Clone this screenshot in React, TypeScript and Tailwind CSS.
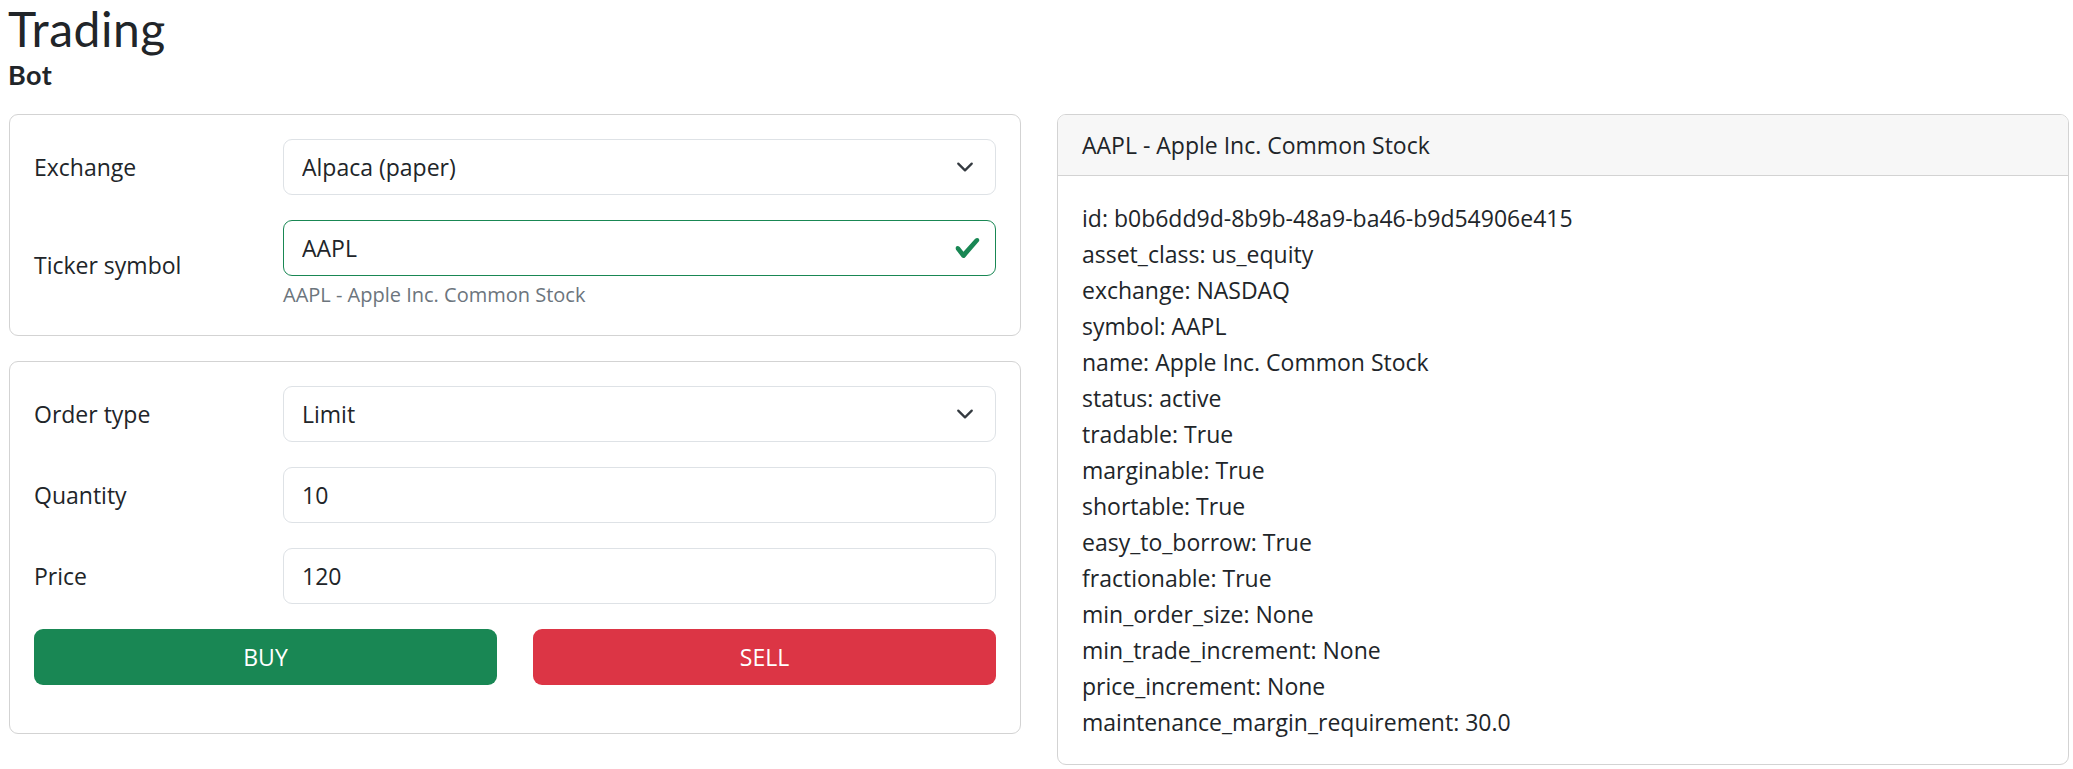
import React from 'react';

const assetInfo: [string, string][] = [
  ['id', 'b0b6dd9d-8b9b-48a9-ba46-b9d54906e415'],
  ['asset_class', 'us_equity'],
  ['exchange', 'NASDAQ'],
  ['symbol', 'AAPL'],
  ['name', 'Apple Inc. Common Stock'],
  ['status', 'active'],
  ['tradable', 'True'],
  ['marginable', 'True'],
  ['shortable', 'True'],
  ['easy_to_borrow', 'True'],
  ['fractionable', 'True'],
  ['min_order_size', 'None'],
  ['min_trade_increment', 'None'],
  ['price_increment', 'None'],
  ['maintenance_margin_requirement', '30.0'],
];

function Chevron() {
  return (
    <svg
      viewBox="0 0 16 16"
      className="pointer-events-none absolute right-[22px] top-1/2 h-[18px] w-[18px] -translate-y-1/2"
    >
      <path
        d="m2 5 6 6 6-6"
        fill="none"
        stroke="#343a40"
        strokeWidth="2"
        strokeLinecap="round"
        strokeLinejoin="round"
      />
    </svg>
  );
}

function SelectField({ value }: { value: string }) {
  return (
    <div className="relative">
      <select
        defaultValue={value}
        className="h-[56px] w-full appearance-none rounded-[9px] border border-[#dee2e6] bg-white pl-[18px] pr-[54px] text-[23px] leading-[36px] text-[#212529] outline-none"
      >
        <option>{value}</option>
      </select>
      <Chevron />
    </div>
  );
}

function TextField({ value, valid }: { value: string; valid?: boolean }) {
  return (
    <div className="relative">
      <input
        readOnly
        defaultValue={value}
        className={`h-[56px] w-full rounded-[9px] border bg-white px-[18px] text-[23px] leading-[36px] text-[#212529] outline-none ${
          valid ? 'border-[#198754]' : 'border-[#dee2e6]'
        }`}
      />
      {valid && (
        <svg
          viewBox="0 0 8 8"
          className="pointer-events-none absolute right-[15px] top-1/2 h-[27px] w-[27px] -translate-y-1/2"
        >
          <path
            fill="#198754"
            d="M2.3 6.73.6 4.53c-.4-1.04.46-1.4 1.1-.8l1.1 1.4 3.4-3.8c.6-.63 1.6-.27 1.2.7l-4 4.6c-.43.5-.8.4-1.1.1z"
          />
        </svg>
      )}
    </div>
  );
}

function FormRow({ label, children }: { label: string; children: React.ReactNode }) {
  return (
    <div className="grid grid-cols-[249px_1fr] items-center">
      <label className="text-[23px] leading-[36px]">{label}</label>
      <div>{children}</div>
    </div>
  );
}

export default function App() {
  return (
    <div className="min-h-screen bg-white font-['Open_Sans','Noto_Sans',sans-serif] text-[#212529]">
      {/* Title */}
      <div className="px-[8px] font-['Lato','Open_Sans',sans-serif]">
        <h2 className="text-[48px] font-normal leading-[58px] tracking-[0.5px]">Trading</h2>
        <h5 className="text-[27px] font-bold leading-[33px] tracking-[0.5px]">Bot</h5>
      </div>

      <div className="mt-[23px] grid grid-cols-2 items-start gap-[36px] pl-[9px] pr-[4px]">
        {/* Left column */}
        <div className="flex flex-col gap-[25px]">
          <div className="rounded-[9px] border border-[#d3d3d3] p-[24px]">
            <div className="flex flex-col gap-[25px]">
              <FormRow label="Exchange">
                <SelectField value="Alpaca (paper)" />
              </FormRow>
              <FormRow label="Ticker symbol">
                <TextField value="AAPL" valid />
                <div className="mt-[3px] text-[20px] leading-[31.5px] text-[#6c757d]">
                  AAPL - Apple Inc. Common Stock
                </div>
              </FormRow>
            </div>
          </div>

          <div className="rounded-[9px] border border-[#d3d3d3] p-[24px]">
            <div className="flex flex-col gap-[25px]">
              <FormRow label="Order type">
                <SelectField value="Limit" />
              </FormRow>
              <FormRow label="Quantity">
                <TextField value="10" />
              </FormRow>
              <FormRow label="Price">
                <TextField value="120" />
              </FormRow>
              <div className="mb-[24px] grid grid-cols-2 gap-[36px]">
                <button className="h-[56px] rounded-[9px] bg-[#198754] text-[23px] leading-[36px] text-white">
                  BUY
                </button>
                <button className="h-[56px] rounded-[9px] bg-[#dc3545] text-[23px] leading-[36px] text-white">
                  SELL
                </button>
              </div>
            </div>
          </div>
        </div>

        {/* Asset card */}
        <div className="overflow-hidden rounded-[9px] border border-[#d3d3d3]">
          <div className="border-b border-[#d3d3d3] bg-[#f7f7f7] px-[24px] py-[12px] text-[23px] leading-[36px]">
            AAPL - Apple Inc. Common Stock
          </div>
          <div className="p-[24px] text-[23px] leading-[36px]">
            {assetInfo.map(([key, value]) => (
              <div key={key}>
                {key}: {value}
              </div>
            ))}
          </div>
        </div>
      </div>
    </div>
  );
}
